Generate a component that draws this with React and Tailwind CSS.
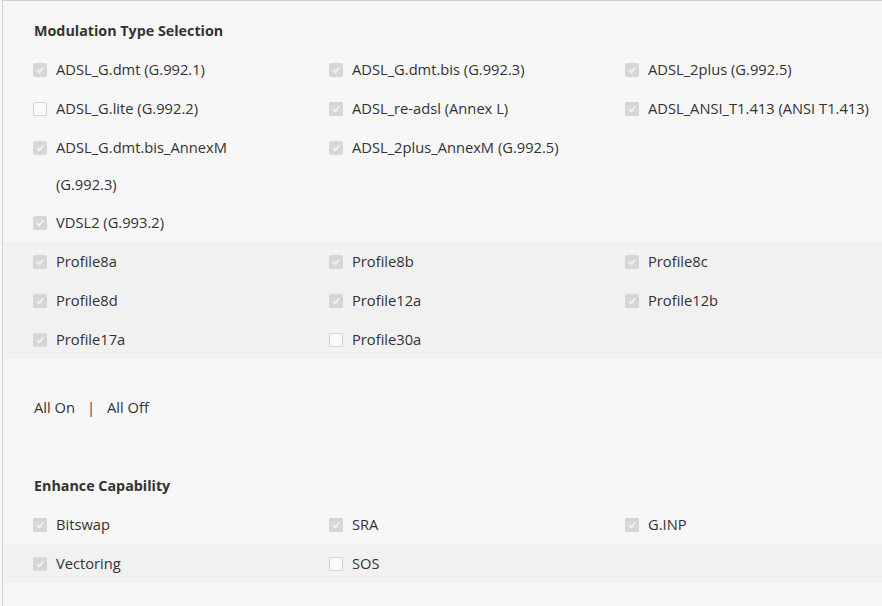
const modRows = [
  [
    { label: 'ADSL_G.dmt (G.992.1)', on: true },
    { label: 'ADSL_G.dmt.bis (G.992.3)', on: true },
    { label: 'ADSL_2plus (G.992.5)', on: true },
  ],
  [
    { label: 'ADSL_G.lite (G.992.2)', on: false },
    { label: 'ADSL_re-adsl (Annex L)', on: true },
    { label: 'ADSL_ANSI_T1.413 (ANSI T1.413)', on: true },
  ],
  [
    { label: 'ADSL_G.dmt.bis_AnnexM (G.992.3)', on: true, wrap: true },
    { label: 'ADSL_2plus_AnnexM (G.992.5)', on: true },
  ],
  [{ label: 'VDSL2 (G.993.2)', on: true }],
]

const profileRows = [
  [
    { label: 'Profile8a', on: true },
    { label: 'Profile8b', on: true },
    { label: 'Profile8c', on: true },
  ],
  [
    { label: 'Profile8d', on: true },
    { label: 'Profile12a', on: true },
    { label: 'Profile12b', on: true },
  ],
  [
    { label: 'Profile17a', on: true },
    { label: 'Profile30a', on: false },
  ],
]

const enhanceRows = [
  [
    { label: 'Bitswap', on: true },
    { label: 'SRA', on: true },
    { label: 'G.INP', on: true },
  ],
  [
    { label: 'Vectoring', on: true },
    { label: 'SOS', on: false },
  ],
]

function Box({ on }) {
  if (on) {
    return (
      <span className="mt-[12px] flex h-[14px] w-[14px] shrink-0 items-center justify-center rounded-[2px] bg-[#d6d6d6]">
        <svg width="10" height="10" viewBox="0 0 10 10">
          <path d="M1.8 5.2 L4 7.3 L8.3 2.6" fill="none" stroke="#f4f4f4" strokeWidth="1.6" />
        </svg>
      </span>
    )
  }
  return (
    <span className="mt-[12px] h-[14px] w-[14px] shrink-0 rounded-[2px] border border-[#d0d0d0] bg-[#fbfbfb]" />
  )
}

function Item({ label, on, wrap }) {
  return (
    <div className="flex w-[296px] shrink-0 items-start py-px">
      <Box on={on} />
      <span className={'ml-[9px] ' + (wrap ? 'w-[210px] leading-[36.5px]' : 'whitespace-nowrap leading-[37px]')}>
        {label}
      </span>
    </div>
  )
}

function Rows({ rows, stripe }) {
  return rows.map((row, i) => (
    <div
      key={i}
      className={
        'flex pl-[30px] ' + (stripe && stripe(i) ? 'bg-[#f1f1f1]' : '')
      }
    >
      {row.map((it) => (
        <Item key={it.label} {...it} />
      ))}
    </div>
  ))
}

export default function App() {
  return (
    <div
      className="min-h-[606px] w-[882px] overflow-hidden bg-[#f7f7f7] pl-[2px] text-[14.7px] text-[#333]"
      style={{ fontFamily: '"Open Sans", "Noto Sans", sans-serif' }}
    >
      <div className="min-h-[606px] border-l border-t border-[#d2d2d2] pt-[10px]">
        <div className="pl-[31px] text-[14.3px] font-bold leading-[39px] text-[#333]">Modulation Type Selection</div>
        <Rows rows={modRows} />
        <Rows rows={profileRows} stripe={() => true} />
        <div className="mt-[29px] flex pl-[31px] leading-[39px]">
          <span>All On</span>
          <span className="mx-[12px] text-[#444]">|</span>
          <span>All Off</span>
        </div>
        <div className="mt-[39px] pl-[31px] text-[14.3px] font-bold leading-[39px]">Enhance Capability</div>
        <Rows rows={enhanceRows} stripe={(i) => i === 1} />
      </div>
    </div>
  )
}
